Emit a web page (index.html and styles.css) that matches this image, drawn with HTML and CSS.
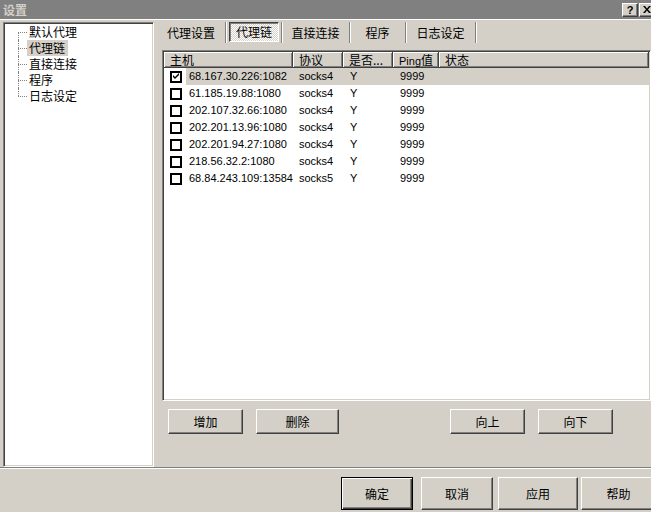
FILE: index.html
```html
<!DOCTYPE html>
<html>
<head>
<meta charset="utf-8">
<link rel="stylesheet" href="styles.css">
</head>
<body>
<div class="win">
  <div class="titlebar">
    <span class="title">设置</span>
    <span class="tbtns">
      <span class="tbtn q">?</span>
      <span class="tbtn x"><svg width="8" height="7" viewBox="0 0 8 7"><path d="M0 0h2l2 2.5 2-2.5h2l-3 3.5 3 3.5h-2l-2-2.5-2 2.5h-2l3-3.5z" fill="#000"/></svg></span>
    </span>
  </div>
  <div class="content">
    <div class="left">
      <div class="tree">
        <div class="node first"><span class="conn"><span class="up"></span><span class="down"></span></span><span class="lbl">默认代理</span></div>
        <div class="node"><span class="conn"><span class="up"></span><span class="down"></span></span><span class="lbl sel">代理链</span></div>
        <div class="node"><span class="conn"><span class="up"></span><span class="down"></span></span><span class="lbl">直接连接</span></div>
        <div class="node"><span class="conn"><span class="up"></span><span class="down"></span></span><span class="lbl">程序</span></div>
        <div class="node last"><span class="conn"><span class="up"></span><span class="down"></span></span><span class="lbl">日志设定</span></div>
      </div>
    </div>
    <div class="panel">
      <div class="tabs">
        <div class="tab t1">代理设置</div>
        <div class="tab t2"><span class="on">代理链</span></div>
        <div class="tab t3">直接连接</div>
        <div class="tab t4">程序</div>
        <div class="tab t5">日志设定</div>
      </div>
      <div class="list">
        <div class="lhead">
          <div class="hc hc-host">主机</div>
          <div class="hc">协议</div>
          <div class="hc">是否...</div>
          <div class="hc"><span class="lat">Ping</span>值</div>
          <div class="hc">状态</div>
        </div>
        <div class="row sel">
          <div class="c host"><span class="cb"><svg width="7" height="7" viewBox="0 0 7 7"><path d="M0 2L2 4L6 0V2L2 6L0 4Z" fill="#000"/></svg></span><span class="ht">68.167.30.226:1082</span></div>
          <div class="c">socks4</div><div class="c cy">Y</div><div class="c cy">9999</div><div class="c"></div>
        </div>
        <div class="row">
          <div class="c host"><span class="cb"></span><span class="ht">61.185.19.88:1080</span></div>
          <div class="c">socks4</div><div class="c cy">Y</div><div class="c cy">9999</div><div class="c"></div>
        </div>
        <div class="row">
          <div class="c host"><span class="cb"></span><span class="ht">202.107.32.66:1080</span></div>
          <div class="c">socks4</div><div class="c cy">Y</div><div class="c cy">9999</div><div class="c"></div>
        </div>
        <div class="row">
          <div class="c host"><span class="cb"></span><span class="ht">202.201.13.96:1080</span></div>
          <div class="c">socks4</div><div class="c cy">Y</div><div class="c cy">9999</div><div class="c"></div>
        </div>
        <div class="row">
          <div class="c host"><span class="cb"></span><span class="ht">202.201.94.27:1080</span></div>
          <div class="c">socks4</div><div class="c cy">Y</div><div class="c cy">9999</div><div class="c"></div>
        </div>
        <div class="row">
          <div class="c host"><span class="cb"></span><span class="ht">218.56.32.2:1080</span></div>
          <div class="c">socks4</div><div class="c cy">Y</div><div class="c cy">9999</div><div class="c"></div>
        </div>
        <div class="row">
          <div class="c host"><span class="cb"></span><span class="ht">68.84.243.109:13584</span></div>
          <div class="c">socks5</div><div class="c cy">Y</div><div class="c cy">9999</div><div class="c"></div>
        </div>
      </div>
      <div class="actions">
        <button class="btn b-add">增加</button>
        <button class="btn b-del">删除</button>
        <button class="btn b-up">向上</button>
        <button class="btn b-down">向下</button>
      </div>
    </div>
  </div>
  <div class="sep"></div>
  <div class="footer">
    <button class="btn fb def">确定</button>
    <button class="btn fb f2">取消</button>
    <button class="btn fb f3">应用</button>
    <button class="btn fb f4">帮助</button>
  </div>
</div>
</body>
</html>
```

FILE: styles.css
```css
html, body {
  margin: 0;
  padding: 0;
}
body {
  width: 651px;
  height: 512px;
  overflow: hidden;
  background: #d4d0c8;
  font-family: "Noto Sans CJK SC", sans-serif;
  font-size: 12px;
  color: #000;
}
.win {
  display: flex;
  flex-direction: column;
  width: 651px;
  height: 512px;
}
.titlebar {
  height: 19px;
  background: #808080;
  border-bottom: 1px solid #fff;
  display: flex;
  align-items: center;
  justify-content: space-between;
  flex: none;
}
.title {
  color: #d4d0c8;
  font-weight: bold;
  font-size: 12px;
  line-height: 19px;
  padding-left: 3px;
}
.tbtns {
  display: flex;
  gap: 1px;
  margin-right: -4px;
}
.tbtn {
  width: 16px;
  height: 14px;
  box-sizing: border-box;
  background: #d4d0c8;
  border: 1px solid;
  border-color: #fff #404040 #404040 #fff;
  box-shadow: inset -1px -1px #808080;
  display: flex;
  align-items: center;
  justify-content: center;
  font-family: "Liberation Sans", sans-serif;
  font-weight: bold;
  font-size: 11px;
  line-height: 12px;
}
.content {
  display: flex;
  height: 447px;
  flex: none;
}
.left {
  padding: 2px 0 0 3px;
}
.tree {
  width: 151px;
  height: 445px;
  box-sizing: border-box;
  background: #fff;
  border: 1px solid;
  border-color: #808080 #fff #fff #808080;
  padding: 1px;
  box-shadow: inset 1px 1px #404040, inset -1px -1px #d4d0c8;
  display: flex;
  flex-direction: column;
}
.node {
  display: flex;
  height: 16px;
  padding-left: 13px;
}
.conn {
  width: 9px;
  display: flex;
  flex-direction: column;
}
.conn .up {
  height: 8px;
  border-left: 1px dotted #808080;
}
.conn .down {
  flex: 1;
  border-left: 1px dotted #808080;
  border-top: 1px dotted #808080;
}
.node.first .up {
  border-left: none;
  margin-left: 1px;
}
.node.last .down {
  border-left: none;
  padding-left: 1px;
}
.lbl {
  line-height: 16px;
  padding: 0 3px 0 2px;
}
.lbl.sel {
  background: #d4d0c8;
}
.panel {
  flex: 1;
  display: flex;
  flex-direction: column;
}
.tabs {
  display: flex;
  height: 21px;
  margin-top: 2px;
  padding-left: 3px;
}
.tab {
  display: flex;
  align-items: center;
  justify-content: center;
  border-right: 1px solid #808080;
  box-shadow: 1px 0 #fff;
  line-height: 16px;
  flex: none;
}
.t1 { width: 68px; }
.t2 { width: 55px; }
.t3 { width: 67px; }
.t4 { width: 55px; }
.t5 { width: 69px; }
.on {
  align-self: stretch;
  flex: 1;
  margin: 0 2px 1px 3px;
  display: flex;
  align-items: center;
  justify-content: center;
  border: 1px solid;
  border-color: #404040 #fff #fff #404040;
  box-shadow: inset 1px 1px #808080;
  background: repeating-conic-gradient(#fff 0 25%, #d4d0c8 0 50%) 0 0 / 2px 2px;
}
.list {
  margin: 7px 0 0 8px;
  height: 351px;
  box-sizing: border-box;
  background: #fff;
  border: 1px solid;
  border-color: #808080 #fff #fff #808080;
  padding: 1px;
  box-shadow: inset 1px 1px #404040, inset -1px -1px #d4d0c8;
  flex: none;
}
.lhead, .row {
  display: grid;
  grid-template-columns: 129px 50px 50px 46px 1fr;
}
.hc {
  height: 16px;
  box-sizing: border-box;
  background: #d4d0c8;
  border-right: 1px solid #404040;
  border-bottom: 1px solid #404040;
  box-shadow: inset 1px 1px #fff, inset -1px -1px #808080;
  padding-left: 6px;
  line-height: 15px;
  white-space: nowrap;
  overflow: hidden;
}
.lat {
  font-family: "Liberation Sans", sans-serif;
  font-size: 11px;
}
.row {
  height: 17px;
  font-family: "Liberation Sans", sans-serif;
  font-size: 11px;
  line-height: 17px;
}
.c {
  padding-left: 6px;
  white-space: nowrap;
}
.c.cy {
  padding-left: 7px;
}
.c.host {
  display: flex;
  align-items: center;
  padding-left: 6px;
}
.cb {
  width: 12px;
  height: 12px;
  box-sizing: border-box;
  border: 2px solid #000;
  background: #fff;
  display: flex;
  align-items: center;
  justify-content: center;
  flex: none;
}
.ht {
  margin-left: 4px;
  padding-left: 3px;
  flex: 1;
  align-self: stretch;
}
.row.sel .ht,
.row.sel .c:not(.host) {
  background: #d4d0c8;
}
.actions {
  display: flex;
  margin-top: 8px;
  padding-left: 14px;
}
.btn {
  font-family: "Noto Sans CJK SC", sans-serif;
  font-size: 12px;
  line-height: 14px;
  color: #000;
  background: #d4d0c8;
  box-sizing: border-box;
  border: 1px solid;
  border-color: #fff #404040 #404040 #fff;
  box-shadow: inset -1px -1px #808080;
  padding: 0;
  margin: 0;
  height: 25px;
  width: 75px;
  flex: none;
}
.b-del { width: 83px; margin-left: 13px; }
.b-up { margin-left: 111px; }
.b-down { margin-left: 13px; }
.sep {
  height: 0;
  border-top: 1px solid #808080;
  border-bottom: 1px solid #fff;
  flex: none;
}
.footer {
  display: flex;
  padding: 8px 0 0 341px;
}
.fb {
  height: 33px;
  width: 72px;
}
.fb.def {
  border: 1px solid #000;
  box-shadow: inset 1px 1px #fff, inset -1px -1px #404040, inset -2px -2px #808080;
}
.f2 { margin-left: 8px; }
.f3 { margin-left: 5px; width: 80px; }
.f4 { margin-left: 3px; width: 75px; }
```
